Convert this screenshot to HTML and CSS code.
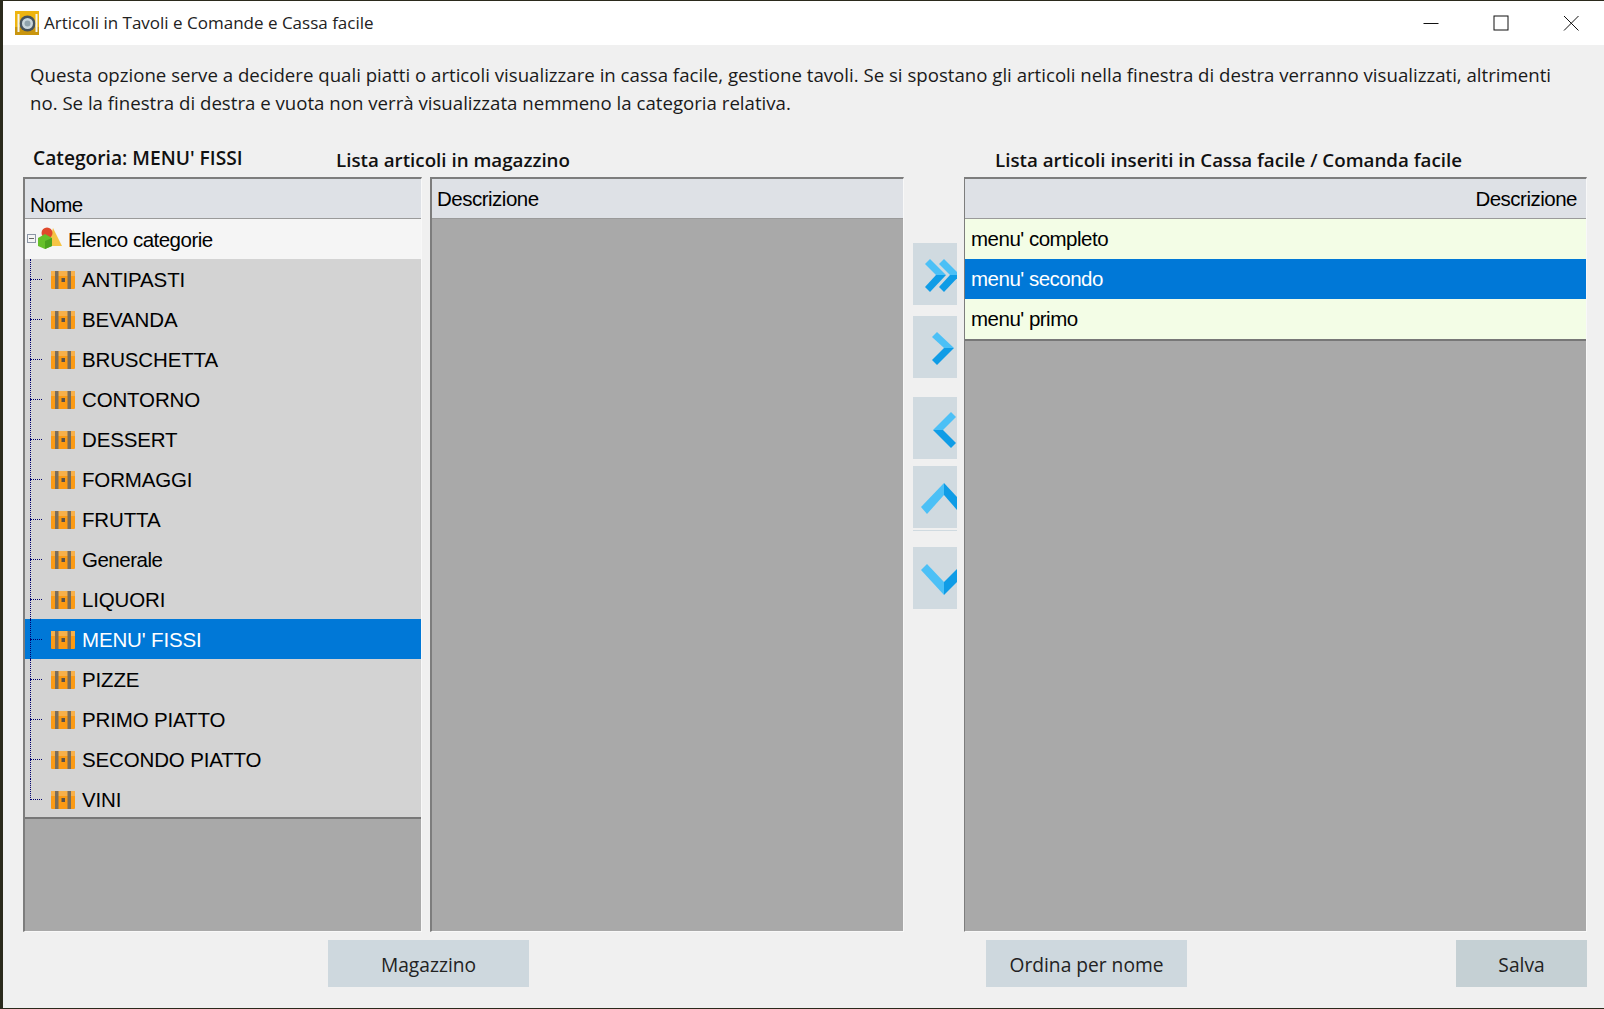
FILE: index.html
```html
<!DOCTYPE html>
<html lang="it">
<head>
  <meta charset="UTF-8">
  <title>Articoli in Tavoli e Comande e Cassa facile</title>
  <link rel="stylesheet" href="styles.css">
</head>
<body>
  <svg class="sprites" width="0" height="0">
    <symbol id="chest" viewBox="0 0 24 20">
      <rect x="0" y="1" width="24" height="18" rx="1" fill="#fb9a14"/>
      <rect x="0" y="1" width="24" height="5" fill="#f7b04a"/>
      <rect x="4" y="1" width="3.5" height="18" fill="#7a6d5a"/>
      <rect x="16.5" y="1" width="3.5" height="18" fill="#7a6d5a"/>
      <rect x="10.5" y="8" width="3.5" height="4" fill="#5b5248"/>
    </symbol>
    <symbol id="shapes" viewBox="0 0 24 22">
      <path d="M15 1 L24 19 L10 19 Z" fill="#f5c445"/>
      <circle cx="9" cy="6" r="5.5" fill="#e0492c"/>
      <path d="M0 11 L7 7 L14 11 L14 19 L7 22 L0 19 Z" fill="#66c02a"/>
      <path d="M7 14 L14 11 L14 19 L7 22 Z" fill="#4aa31e"/>
    </symbol>
  </svg>

  <div class="window">
    <div class="titlebar">
      <div class="app-icon">
        <svg width="24" height="24" viewBox="0 0 24 24">
          <rect width="24" height="24" fill="#eeb40f"/>
          <rect y="16" width="24" height="8" fill="#c9950e"/>
          <circle cx="12.5" cy="12.5" r="8" fill="#46535c"/>
          <circle cx="12.5" cy="12.5" r="5.5" fill="#c9d6dc"/>
          <circle cx="12.5" cy="12.5" r="3" fill="#8fa3ad"/>
          <path d="M3.5 3 V21 M21.5 3 V21" stroke="#f4f4ec" stroke-width="2"/>
        </svg>
      </div>
      <span class="title-text">Articoli in Tavoli e Comande e Cassa facile</span>
      <div class="win-controls">
        <svg class="win-btn" width="16" height="16" viewBox="0 0 16 16"><path d="M0.5 8.5 H15.5" stroke="#111" fill="none"/></svg>
        <svg class="win-btn" width="16" height="16" viewBox="0 0 16 16"><rect x="1" y="1" width="14" height="14" stroke="#111" fill="none"/></svg>
        <svg class="win-btn" width="16" height="16" viewBox="0 0 16 16"><path d="M1 1 L15.5 15.5 M15.5 1 L1 15.5" stroke="#111" fill="none"/></svg>
      </div>
    </div>

    <div class="content">
      <p class="intro">Questa opzione serve a decidere quali piatti o articoli visualizzare in cassa facile, gestione tavoli. Se si spostano gli articoli nella finestra di destra verranno visualizzati, altrimenti no. Se la finestra di destra e vuota non verrà visualizzata nemmeno la categoria relativa.</p>

      <div class="labels">
        <div class="label label-cat">Categoria: MENU' FISSI</div>
        <div class="label label-stock">Lista articoli in magazzino</div>
        <div class="label label-right">Lista articoli inseriti in Cassa facile / Comanda facile</div>
      </div>

      <div class="panels">
        <div class="panel panel-tree">
          <div class="panel-head head-low">Nome</div>
          <div class="tree">
            <div class="tree-root">
              <span class="minus"></span>
              <svg class="root-icon" width="24" height="22"><use href="#shapes"/></svg>
              <span class="lower">Elenco categorie</span>
            </div>
            <div class="tree-row"><svg class="chest" width="24" height="20"><use href="#chest"/></svg>ANTIPASTI</div>
            <div class="tree-row"><svg class="chest" width="24" height="20"><use href="#chest"/></svg>BEVANDA</div>
            <div class="tree-row"><svg class="chest" width="24" height="20"><use href="#chest"/></svg>BRUSCHETTA</div>
            <div class="tree-row"><svg class="chest" width="24" height="20"><use href="#chest"/></svg>CONTORNO</div>
            <div class="tree-row"><svg class="chest" width="24" height="20"><use href="#chest"/></svg>DESSERT</div>
            <div class="tree-row"><svg class="chest" width="24" height="20"><use href="#chest"/></svg>FORMAGGI</div>
            <div class="tree-row"><svg class="chest" width="24" height="20"><use href="#chest"/></svg>FRUTTA</div>
            <div class="tree-row"><svg class="chest" width="24" height="20"><use href="#chest"/></svg><span class="lower">Generale</span></div>
            <div class="tree-row"><svg class="chest" width="24" height="20"><use href="#chest"/></svg>LIQUORI</div>
            <div class="tree-row selected"><svg class="chest" width="24" height="20"><use href="#chest"/></svg>MENU' FISSI</div>
            <div class="tree-row"><svg class="chest" width="24" height="20"><use href="#chest"/></svg>PIZZE</div>
            <div class="tree-row"><svg class="chest" width="24" height="20"><use href="#chest"/></svg>PRIMO PIATTO</div>
            <div class="tree-row"><svg class="chest" width="24" height="20"><use href="#chest"/></svg>SECONDO PIATTO</div>
            <div class="tree-row last"><svg class="chest" width="24" height="20"><use href="#chest"/></svg>VINI</div>
          </div>
        </div>

        <div class="panel panel-stock">
          <div class="panel-head lower">Descrizione</div>
        </div>

        <div class="arrows">
          <div class="arrow arrow-1">
            <svg width="44" height="62">
              <polygon points="12,21 17,16 33,32 23,32" class="light"/><polygon points="23,32 33,32 17,49 12,44" class="dark"/>
              <polygon points="26,21 31,16 47,32 37,32" class="light"/><polygon points="37,32 47,32 31,49 26,44" class="dark"/>
            </svg>
          </div>
          <div class="arrow arrow-2">
            <svg width="44" height="62">
              <polygon points="19,21 24,16 41,32 31,32" class="light"/><polygon points="31,32 41,32 24,49 19,44" class="dark"/>
            </svg>
          </div>
          <div class="arrow arrow-3">
            <svg width="44" height="62">
              <polygon points="20,33 30,33 43,20 38,15" class="light"/><polygon points="20,33 30,33 43,46 38,51" class="dark"/>
            </svg>
          </div>
          <div class="arrow arrow-4">
            <svg width="44" height="62">
              <polygon points="8,41 14,48 31,29 31,17" class="light"/><polygon points="31,17 31,29 44,44 44,31" class="dark"/>
            </svg>
          </div>
          <div class="arrow-line"></div>
          <div class="arrow arrow-5">
            <svg width="44" height="62">
              <polygon points="8,23 14,17 31,35 31,48" class="light"/><polygon points="31,35 44,22 44,35 31,48" class="dark"/>
            </svg>
          </div>
        </div>

        <div class="panel panel-right">
          <div class="panel-head head-right lower">Descrizione</div>
          <div class="list-row lower">menu' completo</div>
          <div class="list-row selected lower">menu' secondo</div>
          <div class="list-row list-last lower">menu' primo</div>
        </div>
      </div>

      <div class="footer">
        <button class="btn btn-stock">Magazzino</button>
        <button class="btn btn-sort">Ordina per nome</button>
        <button class="btn btn-save">Salva</button>
      </div>
    </div>
  </div>
</body>
</html>
```

FILE: styles.css
```css
body {
  margin: 0;
  padding: 0;
  height: 1009px;
  overflow: hidden;
  background: #2b2a1c;
  font-family: "Open Sans", "Liberation Sans", sans-serif;
}

.sprites {
  display: block;
  height: 0;
}

.window {
  margin: 1px 0 0 3px;
  height: 1007px;
  background: #f0f0f0;
  display: flex;
  flex-direction: column;
}

/* title bar */
.titlebar {
  height: 44px;
  background: #fff;
  display: flex;
  align-items: center;
  padding-left: 12px;
  flex-shrink: 0;
}

.app-icon {
  width: 24px;
  height: 24px;
  margin-right: 5px;
}

.title-text {
  font-size: 17px;
  color: #222;
  margin-top: -2px;
}

.win-controls {
  margin-left: auto;
  display: flex;
  gap: 54px;
  padding-right: 25px;
}

.win-btn {
  display: block;
}

/* main part */
.content {
  flex: 1;
  padding: 0 17px 0 20px;
  display: flex;
  flex-direction: column;
}

.intro {
  margin: 16px 0 0 7px;
  padding-right: 20px;
  height: 58px;
  font-size: 18.65px;
  line-height: 28px;
  color: #1a1a1a;
}

.labels {
  display: flex;
  height: 58px;
  padding-top: 28px;
  box-sizing: border-box;
  font-size: 18.75px;
  font-weight: 600;
  color: #111;
}

.label-cat {
  width: 303px;
  margin-left: 10px;
  margin-top: -3px;
  font-size: 19.2px;
}

.label-stock {
  width: 659px;
}

.panels {
  display: flex;
  height: 755px;
}

.panel {
  box-sizing: border-box;
  background: #a9a9a9;
  border-top: 2px solid #7d7d7d;
  border-left: 2px solid #7d7d7d;
  border-right: 1px solid #f8f8f8;
  border-bottom: 1px solid #f8f8f8;
  font-family: "Liberation Sans", Arial, sans-serif;
  font-size: 20.5px;
  color: #000;
}

.lower {
  letter-spacing: -0.5px;
}

.panel-tree {
  width: 399px;
}

.panel-stock {
  width: 474px;
  margin-left: 8px;
}

.panel-right {
  width: 623px;
  border-left-width: 1px;
}

.panel-head {
  height: 40px;
  box-sizing: border-box;
  background: #dee1e6;
  border-bottom: 1px solid #9a9a9a;
  padding: 8px 0 0 5px;
}

.head-low {
  padding-top: 14px;
  letter-spacing: -0.5px;
}

.head-right {
  text-align: right;
  padding-right: 9px;
}

/* category tree */
.tree {
  position: relative;
  border-bottom: 2px solid #777;
  height: 600px;
  box-sizing: border-box;
  background: #d3d3d3;
}

.tree-root,
.tree-row {
  position: relative;
  height: 40px;
  display: flex;
  align-items: center;
  box-sizing: border-box;
  padding-top: 2px;
}

.tree-root {
  background: #f5f5f5;
  padding-left: 13px;
}

.tree-row {
  padding-left: 26px;
  letter-spacing: -0.15px;
}

.root-icon {
  margin-right: 6px;
  margin-top: -4px;
}

.chest {
  margin-right: 7px;
}

.minus {
  position: absolute;
  left: 2px;
  top: 15px;
  width: 7px;
  height: 7px;
  border: 1px solid #8c96a6;
  background: linear-gradient(#666, #666) center / 5px 1px no-repeat #f4f4f4;
}

.tree-row::before {
  content: "";
  position: absolute;
  left: 5px;
  top: 0;
  bottom: 0;
  border-left: 1px dotted #00006e;
}

.tree-row.last::before {
  bottom: 19px;
}

.tree-row::after {
  content: "";
  position: absolute;
  left: 5px;
  top: 20px;
  width: 12px;
  border-top: 1px dotted #00006e;
}

.tree-row.selected {
  background: #0078d7;
  color: #fff;
}

/* arrow buttons */
.arrows {
  width: 60px;
  padding-left: 9px;
  box-sizing: border-box;
  display: flex;
  flex-direction: column;
}

.arrow {
  width: 44px;
  height: 62px;
  background: #d0dae0;
  overflow: hidden;
}

.arrow svg {
  display: block;
}

.arrow .light {
  fill: #4cc0f6;
}

.arrow .dark {
  fill: #0f9ce6;
}

.arrow-1 {
  margin-top: 66px;
}

.arrow-2 {
  margin-top: 11px;
}

.arrow-3 {
  margin-top: 19px;
}

.arrow-4 {
  margin-top: 7px;
}

.arrow-line {
  width: 44px;
  height: 1px;
  margin-top: 2px;
  background: #d0dae0;
}

.arrow-5 {
  margin-top: 16px;
}

/* right list */
.list-row {
  height: 40px;
  background: #f3fde6;
  padding-left: 6px;
  display: flex;
  align-items: center;
}

.list-row.selected {
  background: #0078d7;
  color: #fff;
}

.list-last {
  border-bottom: 2px solid #777;
  box-sizing: content-box;
}

/* bottom buttons */
.footer {
  display: flex;
  margin-top: 8px;
  padding-left: 305px;
}

.btn {
  height: 47px;
  width: 201px;
  border: none;
  padding: 2px 0 0;
  background: #ced8de;
  font-family: "Open Sans", "Liberation Sans", sans-serif;
  font-size: 19.2px;
  color: #222;
}

.btn-sort {
  margin-left: 457px;
}

.btn-save {
  width: 131px;
  margin-left: 269px;
  background: #c5d0d4;
}
```
